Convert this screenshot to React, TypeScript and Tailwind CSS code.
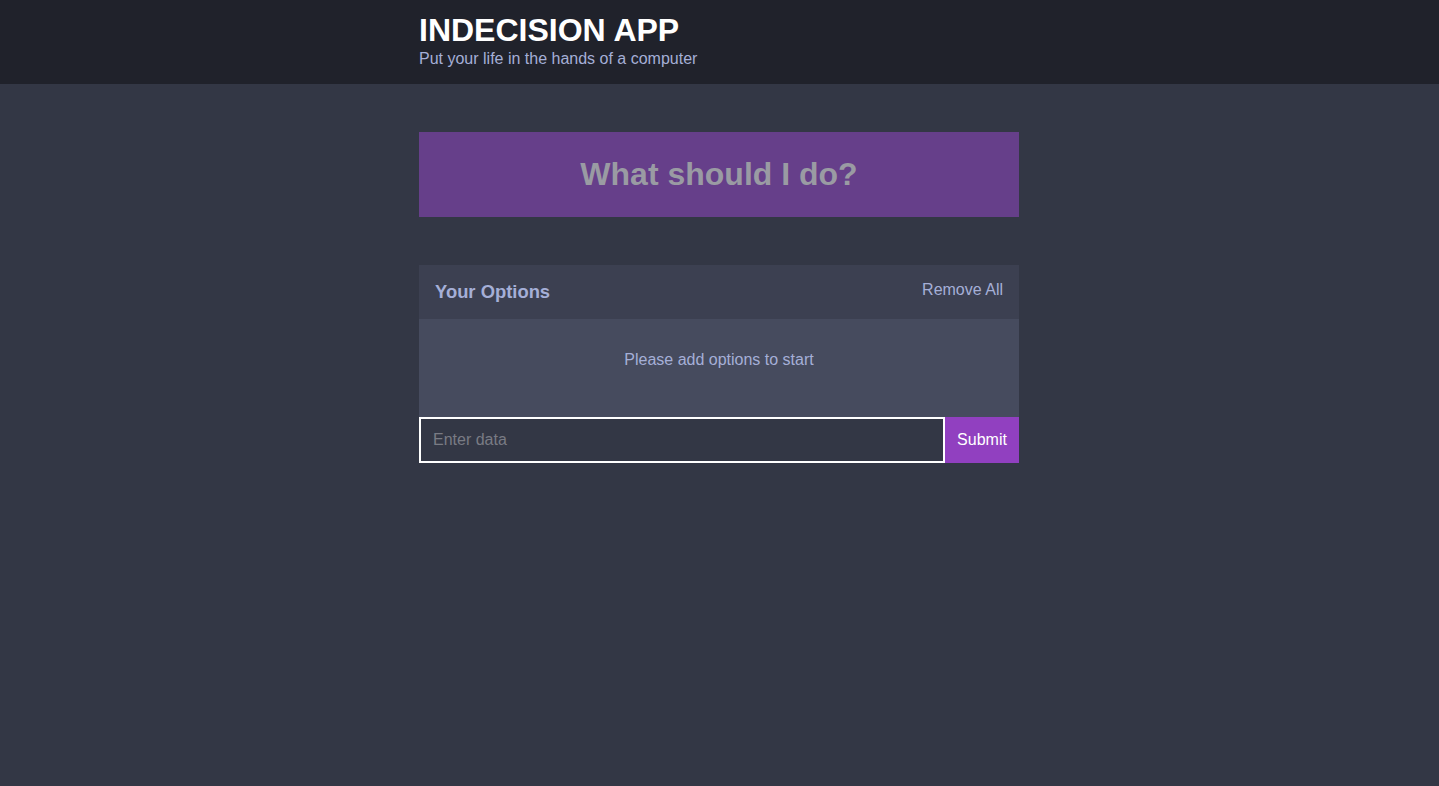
const App = () => {
  return (
    <div
      className="min-h-[786px] bg-[#333745] text-[#a5afd7]"
      style={{ fontFamily: '"Liberation Sans", Arial, sans-serif' }}
    >
      <header className="bg-[#20222b] h-[84px] pt-[12px]">
        <div className="w-[601px] mx-auto pr-px">
          <h1 className="text-[32px] leading-[36px] font-bold text-white">INDECISION APP</h1>
          <h2 className="text-[16px] leading-[18px] mt-[2px] text-[#a5afd7]">
            Put your life in the hands of a computer
          </h2>
        </div>
      </header>

      <main className="w-[601px] mx-auto pr-px pt-[48px]">
        <button
          disabled
          className="w-full h-[85px] pb-[2px] bg-[#663f8a] text-[#9a9ba3] text-[32px] font-bold"
        >
          What should I do?
        </button>

        <div className="mt-[48px]">
          <div className="h-[54px] bg-[#3c4051] flex items-center justify-between px-4">
            <h3 className="text-[18.4px] font-bold">Your Options</h3>
            <button className="text-[16px] text-[#a5afd7] pb-[5px]">Remove All</button>
          </div>
          <div className="h-[98px] bg-[#464b5e] pt-[32px]">
            <p className="text-center text-[16px] leading-[18px]">Please add options to start</p>
          </div>
          <form className="flex" onSubmit={(e) => e.preventDefault()}>
            <input
              placeholder="Enter data"
              className="w-[526px] h-[46px] border-2 border-white bg-[#333745] px-3 text-[16px] text-[#a5afd7] placeholder:text-[#797b84] outline-none"
            />
            <button className="w-[74px] h-[46px] bg-[#9140c0] text-white text-[16px]">
              Submit
            </button>
          </form>
        </div>
      </main>
    </div>
  );
};

export default App;
